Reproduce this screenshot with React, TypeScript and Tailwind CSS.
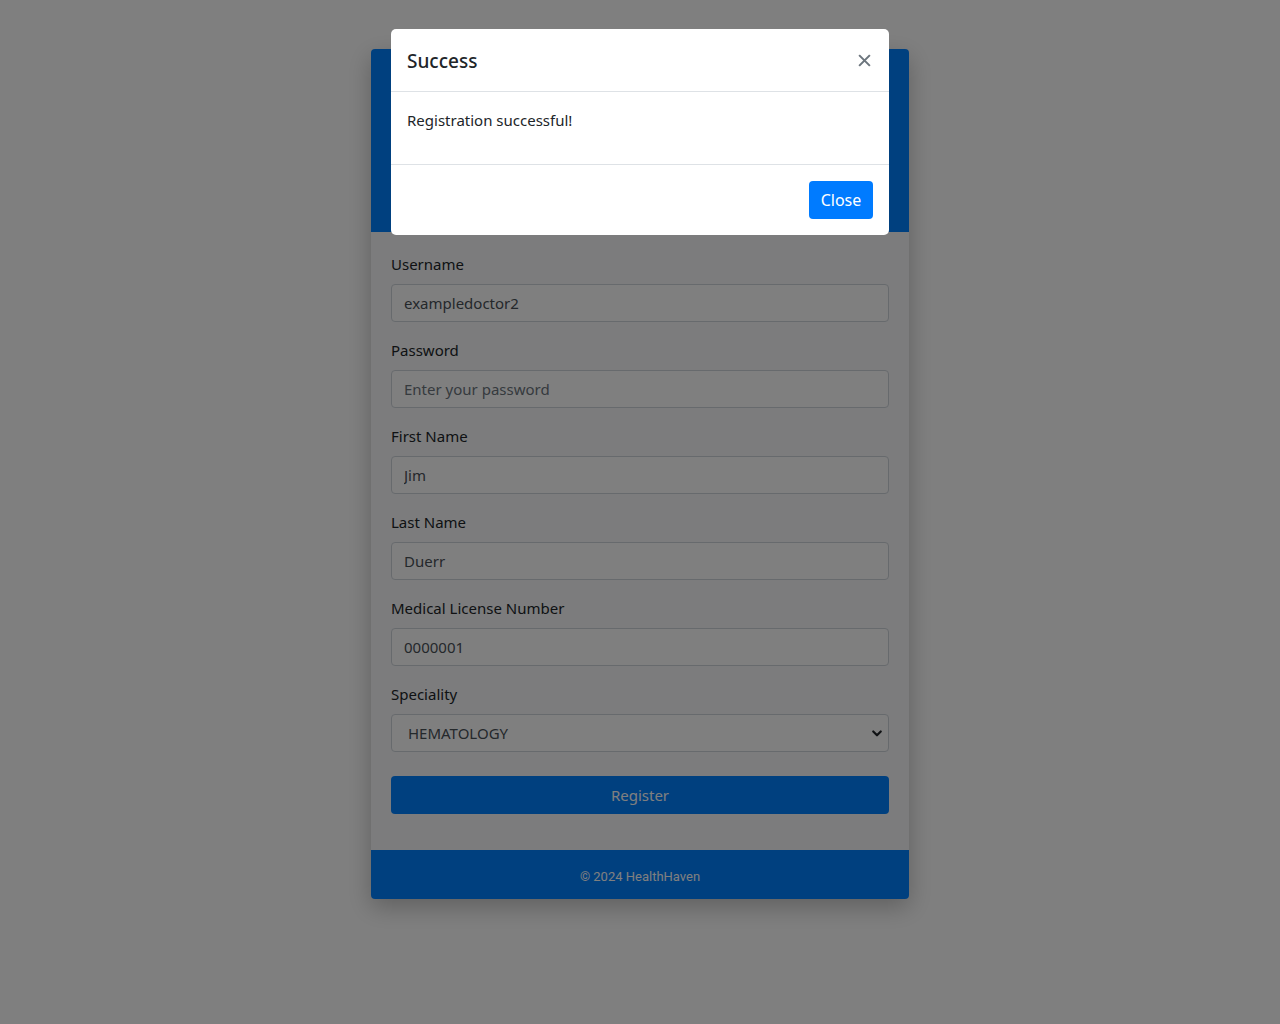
import { useState } from 'react'

const fields = [
  { label: 'Username', value: 'exampledoctor2', placeholder: 'Enter your username', type: 'text' },
  { label: 'Password', value: '', placeholder: 'Enter your password', type: 'password' },
  { label: 'First Name', value: 'Jim', placeholder: 'Enter your first name', type: 'text' },
  { label: 'Last Name', value: 'Duerr', placeholder: 'Enter your last name', type: 'text' },
  { label: 'Medical License Number', value: '0000001', placeholder: 'Enter license number', type: 'text' },
]

export default function App() {
  const [showModal, setShowModal] = useState(true)

  return (
    <div
      className="min-h-screen bg-white pt-[49px] text-[#212529]"
      style={{ fontFamily: '"Noto Sans", "Open Sans", sans-serif' }}
    >
      <div className="mx-auto w-[538px] overflow-hidden rounded bg-[#f8f9fa] shadow-[0_8px_24px_rgba(0,0,0,0.25)]">
        {/* Header (covered by the modal) */}
        <div className="h-[183px] bg-[#0080ff]" />

        {/* Form */}
        <form className="px-5 pt-5 pb-9" onSubmit={(e) => e.preventDefault()}>
          {fields.map((f) => (
            <div key={f.label} className="mb-4">
              <label className="mb-2 block text-[15px] leading-6">{f.label}</label>
              <input
                type={f.type}
                defaultValue={f.value}
                placeholder={f.placeholder}
                className="block h-[38px] w-full rounded border border-[#ced4da] bg-white px-3 text-[15px] text-[#495057] placeholder-[#6c757d] outline-none"
              />
            </div>
          ))}
          <div className="mb-6">
            <label className="mb-2 block text-[15px] leading-6">Speciality</label>
            <div className="relative">
              <select
                defaultValue="HEMATOLOGY"
                className="block h-[38px] w-full appearance-none rounded border border-[#ced4da] bg-white pr-8 pl-4 text-[15px] text-[#495057] outline-none"
              >
                <option>CARDIOLOGY</option>
                <option>DERMATOLOGY</option>
                <option>HEMATOLOGY</option>
                <option>NEUROLOGY</option>
              </select>
              <svg
                className="pointer-events-none absolute top-1/2 right-[6px] -translate-y-1/2"
                width="12"
                height="12"
                viewBox="0 0 16 16"
                fill="none"
                stroke="#212529"
                strokeWidth="3"
                strokeLinecap="round"
                strokeLinejoin="round"
              >
                <path d="M3 6l5 5 5-5" />
              </svg>
            </div>
          </div>
          <button
            type="submit"
            className="block h-[38px] w-full rounded bg-[#0080ff] text-[15px] text-white"
          >
            Register
          </button>
        </form>

        {/* Footer */}
        <div
          className="flex h-[49px] items-center justify-center pt-1 bg-[#0080ff] text-[13px] text-white"
          style={{ fontFamily: 'Roboto, "Liberation Sans", sans-serif' }}
        >
          © 2024 HealthHaven
        </div>
      </div>

      {showModal && (
        <>
          <div className="fixed inset-0 bg-black/50" />
          <div className="fixed inset-0 flex justify-center pt-[29px]">
            <div className="h-fit w-[498px] rounded-[5px] bg-white">
              <div className="flex h-[63px] items-center justify-between border-b border-[#dee2e6] pr-[14px] pl-4">
                <h5 className="pt-0.5 text-[19px] font-medium leading-6 text-[#212529]">Success</h5>
                <button onClick={() => setShowModal(false)} className="p-1 text-[#6c757d]">
                  <svg width="13" height="13" viewBox="0 0 14 14" stroke="currentColor" strokeWidth="2.2" strokeLinecap="square">
                    <path d="M2 2l10 10M12 2L2 12" />
                  </svg>
                </button>
              </div>
              <div className="border-b border-[#dee2e6] p-4">
                <p className="mb-4 text-[15px] leading-6 text-[#212529]">Registration successful!</p>
              </div>
              <div className="flex justify-end p-4">
                <button
                  onClick={() => setShowModal(false)}
                  className="h-[38px] w-16 rounded bg-[#007bff] text-base text-white"
                >
                  Close
                </button>
              </div>
            </div>
          </div>
        </>
      )}
    </div>
  )
}
